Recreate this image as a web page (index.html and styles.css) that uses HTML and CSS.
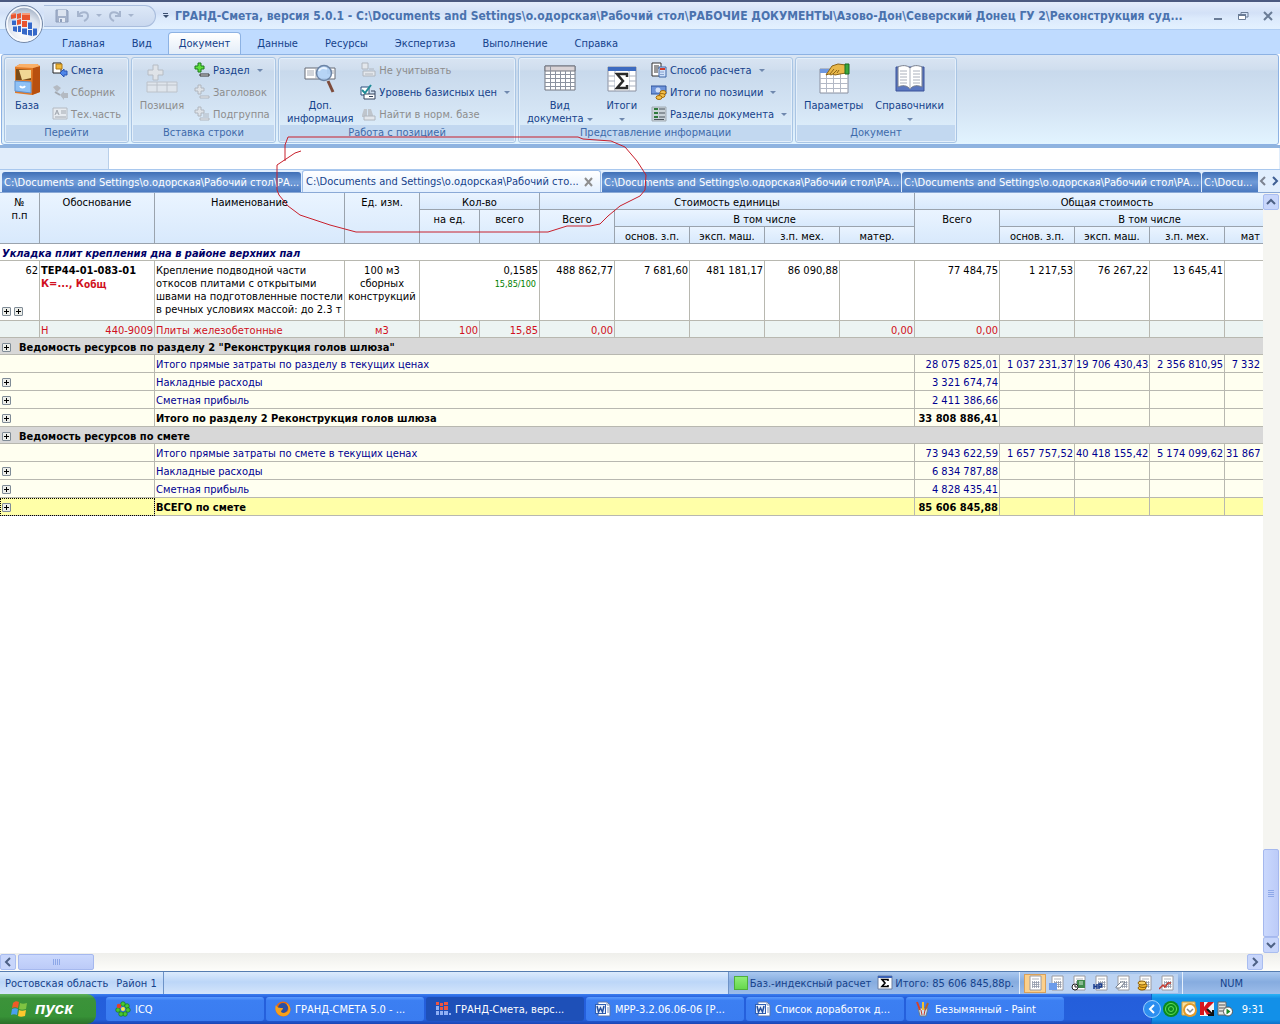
FILE: index.html
```html
<!DOCTYPE html>
<html lang="ru">
<head>
  <meta charset="UTF-8" />
  <meta name="viewport" content="width=device-width, initial-scale=1.0" />
  <title>ГРАНД-Смета, версия 5.0.1</title>
  <link rel="stylesheet" href="styles.css">
</head>
<body>

  <!-- Shared icons -->
  <svg class="sprite" aria-hidden="true">
    <symbol id="i-word" viewBox="0 0 16 16">
      <path d="M3 1h9l3 3v11H3z" fill="#fff" stroke="#5a77ad"/>
      <path d="M12 1v3h3M12 7h2M12 9h2M12 11h2" fill="none" stroke="#7b93c0"/>
      <path d="M0 3h11v10H0z" fill="#2f5fb3"/>
      <path d="M1 4h9v8H1z" fill="#e8effb"/>
      <path d="M2 5l1.500 6L5.500 7l2 4L9 5" fill="none" stroke="#2350a0" stroke-width="1.500"/>
    </symbol>
    <symbol id="i-sheet" viewBox="0 0 16 16">
      <path d="M3 1h11v14H3z" fill="#fff" stroke="#9a9aa0"/>
      <path d="M5 3h7v2H5z" fill="#d8dade"/>
      <path d="M5.500 7.500h7M5.500 9.500h7M5.500 11.500h7M5.500 6v7M7.500 6v7M9.500 6v7M11.500 6v7" stroke="#9098a8" stroke-width=".8"/>
    </symbol>
    <symbol id="i-plusdoc" viewBox="0 0 16 16">
      <path d="M6 12h9v2H6z" fill="#e9edf2" stroke="var(--base)"/>
      <path d="M4 1h3v3h3v3H7v3H4V7H1V4h3z" fill="var(--plus)" stroke="currentColor"/>
    </symbol>
    <symbol id="i-sigma" viewBox="0 0 16 16">
      <path d="M1 1h14v13H1z" fill="#fff" stroke="#6d7f9f"/>
      <path d="M1 1h14v2H1z" fill="#3a62b5"/>
      <path d="M11 6V4.500H5L8 8l-3 3.500h6V10" fill="none" stroke="#000" stroke-width="1.600"/>
    </symbol>
  </svg>

  <!-- Title bar -->
  <header class="titlebar">
    <button class="orb" aria-label="Меню приложения">
      <svg viewBox="0 0 40 40" width="40" height="40">
        <defs>
          <radialGradient id="orb" cx="50%" cy="75%" r="75%">
            <stop offset="0" stop-color="#fff"/><stop offset=".6" stop-color="#dbe2ec"/><stop offset="1" stop-color="#98a7be"/>
          </radialGradient>
        </defs>
        <circle cx="20" cy="20" r="18.500" fill="url(#orb)" stroke="#7388a8"/>
        <circle cx="20" cy="20" r="17" fill="none" stroke="#f8fbff" stroke-width="1.500"/>
        <path d="M7 10l5-1v5l-5 1zM13 10l4-1v5l-4 1zM18 9l8 0v7h-8zM13 16l4-1v5l-4 1zM18 17h5v6h-5z" fill="#e8552f"/>
        <path d="M18 9h8v2h-8zM7 10l5-1v1l-5 1z" fill="#f79a78"/>
        <path d="M8 16l4 0v5l-4 0zM9 22l4 0v6l-4-1zM14 22l3 0v6l-3 0zM18 24h5v7l-5-1zM24 18l4 0v7h-4zM24 26h4v6l-4-1zM29 24l4 0v7l-4 1z" fill="#3568c8"/>
        <path d="M8 16h4v1H8zM9 22h4v1H9zM18 24h5v1h-5zM24 18h4v1h-4zM29 24h4v1h-4z" fill="#86aef0"/>
      </svg>
    </button>
    <div class="quick">
      <button aria-label="Сохранить">
        <svg viewBox="0 0 16 16" width="16" height="16"><path d="M2 2h11l1 1v11H2z" fill="#a3b1ca" stroke="#8f9fbb"/><path d="M4 2h8v6H4z" fill="#dce4f0"/><path d="M5 10h6v4H5z" fill="#e4eaf4"/><path d="M6 11h2v3H6z" fill="#8f9fbb"/></svg>
      </button>
      <button aria-label="Отменить">
        <svg viewBox="0 0 16 16" width="16" height="16"><path d="M3 3v5h5M3 8c3-5 10-5 10 0 0 3-2 4-4 5" fill="none" stroke="#a6b5ce" stroke-width="2"/></svg>
      </button>
      <i class="caret pale"></i>
      <button aria-label="Вернуть">
        <svg viewBox="0 0 16 16" width="16" height="16"><path d="M13 3v5H8M13 8C10 3 3 3 3 8c0 3 2 4 4 5" fill="none" stroke="#a6b5ce" stroke-width="2"/></svg>
      </button>
      <i class="caret pale"></i>
    </div>
    <button class="custom" aria-label="Настройка панели"><i class="caret dark"></i></button>
    <h1>ГРАНД-Смета, версия 5.0.1 - C:\Documents and Settings\о.одорская\Рабочий стол\РАБОЧИЕ ДОКУМЕНТЫ\Азово-Дон\Северский Донец ГУ 2\Реконструкция суд...</h1>
    <div class="winbtns">
      <button aria-label="Свернуть"><svg viewBox="0 0 12 12" width="12" height="12"><path d="M2 9h8" stroke="#6a7c96" stroke-width="2"/></svg></button>
      <button aria-label="Восстановить"><svg viewBox="0 0 12 12" width="12" height="12"><path d="M4 4V2.500h7V7H9" fill="none" stroke="#6a7c96"/><path d="M1.500 4.500h7v5h-7z" fill="#fff" stroke="#6a7c96"/><path d="M1 5h8" stroke="#6a7c96" stroke-width="2"/></svg></button>
      <button aria-label="Закрыть"><svg viewBox="0 0 12 12" width="12" height="12"><path d="M2 2l8 8M10 2l-8 8" stroke="#6a7c96" stroke-width="2"/></svg></button>
    </div>
  </header>

  <!-- Ribbon tabs -->
  <nav class="tabs">
    <a href="#">Главная</a>
    <a href="#">Вид</a>
    <a href="#" class="active">Документ</a>
    <a href="#">Данные</a>
    <a href="#">Ресурсы</a>
    <a href="#">Экспертиза</a>
    <a href="#">Выполнение</a>
    <a href="#">Справка</a>
  </nav>

  <!-- Ribbon -->
  <div class="ribbon">
    <section class="group go">
      <div class="tools">
        <button class="big">
          <svg viewBox="0 0 32 32" width="32" height="32">
            <path d="M4 4l5-3h17l3 2v26l-8 3-17-2z" fill="#e27a26"/>
            <path d="M22 5l7-2v26l-8 3z" fill="#b8500f"/>
            <path d="M4 4l5-3h17l3 2-7 2z" fill="#f9b069"/>
            <path d="M5 6l15 1v10H5z" fill="#7a4b18"/>
            <path d="M8 7l12 0v8l-9 2z" fill="#f0d795"/>
            <path d="M4 18l16 1v11L4 28z" fill="#8fc1f5" stroke="#5e93d3"/>
            <path d="M9 23c1 2 4 2 5 0" fill="none" stroke="#fff" stroke-width="2"/>
          </svg>
          <span>База</span>
        </button>
        <div class="list">
          <button>
            <svg viewBox="0 0 16 16"><path d="M1 1h8v10H1z" fill="#fff" stroke="#222"/><path d="M4 2h6v5H4z" fill="#f0b93a" stroke="#b37a12"/><path d="M8 11l4-4v2h3v4h-3v2z" fill="#4f86e8" stroke="#2b57b5"/></svg>
            Смета
          </button>
          <button disabled>
            <svg viewBox="0 0 16 16"><path d="M1 3l4-2 4 3-4 4z" fill="#b4bac2"/><path d="M8 11l4-4v2h4v5h-4v2z" fill="#b4bac2"/><path d="M3 8l5 3" stroke="#a2a8b0" stroke-width="2"/></svg>
            Сборник
          </button>
          <button disabled>
            <svg viewBox="0 0 16 16"><path d="M1 2h14v11H1z" fill="#e6ebf0" stroke="#b4bac2"/><path d="M3 9l2-5 2 5M4 7h2M9 5h5M9 7h5M3 11h11" fill="none" stroke="#a2a8b0"/></svg>
            Тех.часть
          </button>
        </div>
      </div>
      <h2>Перейти</h2>
    </section>

    <section class="group insert">
      <div class="tools">
        <button class="big" disabled>
          <svg viewBox="0 0 32 32" width="32" height="32">
            <path d="M7 2h5v5h5v5h-5v5H7v-5H2V7h5z" fill="#dfe3e8" stroke="#b6bcc4"/>
            <path d="M1 19h30v10H1zM11 19v10M21 19v10M1 22h30" fill="#dfe5ec" stroke="#bcc2ca"/>
          </svg>
          <span>Позиция</span>
        </button>
        <div class="list">
          <button><svg class="green" viewBox="0 0 16 16"><use href="#i-plusdoc"/></svg>Раздел<i class="caret"></i></button>
          <button disabled><svg class="grey" viewBox="0 0 16 16"><use href="#i-plusdoc"/></svg>Заголовок</button>
          <button disabled><svg class="grey" viewBox="0 0 16 16"><use href="#i-plusdoc"/><path d="M9 8h6M9 10h6" stroke="#b0b6be"/></svg>Подгруппа</button>
        </div>
      </div>
      <h2>Вставка строки</h2>
    </section>

    <section class="group position">
      <div class="tools">
        <button class="big">
          <svg viewBox="0 0 32 32" width="32" height="32">
            <path d="M1 5h30v11H1z" fill="#fff" stroke="#666b75"/>
            <path d="M3 8h7M3 10h7M3 12h7M12 5v11M23 8h7M23 10h7" stroke="#a5abb5"/>
            <path d="M24 18l5 11" stroke="#7d4b3b" stroke-width="3"/>
            <circle cx="20" cy="10" r="7.500" fill="#a9cdf5" fill-opacity=".85" stroke="#6c84a5" stroke-width="1.500"/>
            <path d="M15 8c1-3 5-4 8-2" fill="none" stroke="#e8f3ff" stroke-width="2"/>
          </svg>
          <span>Доп.<br>информация</span>
        </button>
        <div class="list">
          <button disabled>
            <svg viewBox="0 0 16 16"><path d="M2 1h6v6H2z" fill="#e3e7ec" stroke="#b0b6be"/><path d="M3 9h12v5H3z" fill="#e3e7ec" stroke="#b0b6be"/><path d="M9 7h5M5 12h8" stroke="#b0b6be"/></svg>
            Не учитывать
          </button>
          <button>
            <svg viewBox="0 0 16 16"><path d="M1 3h8v8H1z" fill="#fff" stroke="#2b4f7c"/><path d="M4 10h11v5H4z" fill="#fff" stroke="#33435c"/><path d="M9 12.500h4M11 7h4v3" fill="none" stroke="#33435c"/><path d="M2 6l3 3 6-8" fill="none" stroke="#1e8b96" stroke-width="2"/></svg>
            Уровень базисных цен<i class="caret"></i>
          </button>
          <button disabled>
            <svg viewBox="0 0 16 16"><path d="M2 9l2-6h3v8H2zM8 3h3l2 6v2H8z" fill="#bfc5cc"/><path d="M4 10h11v4H4z" fill="#e3e7ec" stroke="#b0b6be"/></svg>
            Найти в норм. базе
          </button>
        </div>
      </div>
      <h2>Работа с позицией</h2>
    </section>

    <section class="group view">
      <div class="tools">
        <button class="big">
          <svg viewBox="0 0 32 32" width="32" height="32">
            <path d="M1 3h30v24H1z" fill="#fff" stroke="#70757f"/>
            <path d="M1 3h30v5H1z" fill="#d9d3d6" stroke="#70757f"/>
            <path d="M1 11.500h30M1 15.500h30M1 19.500h30M1 23.500h30M6.500 3v24M11.500 8v19M16.500 8v19M21.500 8v19M26.500 8v19" stroke="#8c93a0"/>
          </svg>
          <span>Вид<br>документа <i class="caret"></i></span>
        </button>
        <button class="big">
          <svg viewBox="0 0 32 32" width="32" height="32">
            <path d="M2 4h28v24H2z" fill="#fff" stroke="#8a90a0"/>
            <path d="M2 4h28v4H2z" fill="#3d6bc0"/>
            <path d="M2 13h28M2 18h28M2 23h28M9 8v20M23 8v20" stroke="#a9b1c0"/>
            <path d="M9 9h14v18H9z" fill="#fff"/>
            <path d="M21 14v-3H11l6 7-6 7h10v-3" fill="none" stroke="#2a2a2a" stroke-width="2.500"/>
          </svg>
          <span>Итоги<br><i class="caret"></i></span>
        </button>
        <div class="list">
          <button>
            <svg viewBox="0 0 16 16"><path d="M1 1h9v13H1z" fill="#fff" stroke="#333"/><path d="M3 4h5M3 6h5M3 8h4M3 10h4" stroke="#333"/><path d="M8 5h7v10H8z" fill="#cfe0f8" stroke="#3c66a8"/><path d="M9 7h5" stroke="#d03c2c" stroke-width="2"/><path d="M9.500 10h4M9.500 12.500h4" stroke="#3c66a8" stroke-dasharray="1 1"/></svg>
            Способ расчета<i class="caret"></i>
          </button>
          <button>
            <svg viewBox="0 0 16 16"><path d="M0 2h15v8H0z" fill="#6d93da" stroke="#31549c"/><circle cx="7" cy="6" r="2.500" fill="#cfdef8"/><ellipse cx="12" cy="8.500" rx="3" ry="2" fill="#f4c24e" stroke="#a56b0c"/><ellipse cx="11" cy="11.500" rx="3" ry="2" fill="#f4c24e" stroke="#a56b0c"/><ellipse cx="8" cy="13.500" rx="3" ry="2" fill="#f4c24e" stroke="#a56b0c"/></svg>
            Итоги по позиции<i class="caret"></i>
          </button>
          <button>
            <svg viewBox="0 0 16 16"><path d="M1 1h14v14H1z" fill="#c9d2d8" stroke="#a2acb4"/><path d="M3 3h4M3 7h4M3 11h4" stroke="#2f7a3c" stroke-width="2"/><path d="M8 3h6M8 7h6M8 11h6M3 13.500h10" stroke="#4a545c"/></svg>
            Разделы документа<i class="caret"></i>
          </button>
        </div>
      </div>
      <h2>Представление информации</h2>
    </section>

    <section class="group doc">
      <div class="tools">
        <button class="big">
          <svg viewBox="0 0 32 32" width="32" height="32">
            <path d="M2 6h28v24H2z" fill="#fff" stroke="#8a90a0"/>
            <path d="M2 6h28v4H2z" fill="#6f98e0"/>
            <path d="M2 15.500h28M2 20.500h28M2 25.500h28M8.500 10v20M15.500 10v20M22.500 10v20" stroke="#b3b9c6"/>
            <path d="M8 12l6-9 6-2 8 1v8l-6 1-5 1-2-1-2 1-2-1z" fill="#e9b84a" stroke="#8c6417"/>
            <path d="M12 11l4-5M15 11l4-4M19 10l2-3" stroke="#8c6417"/>
            <path d="M27 1h4v10h-4z" fill="#39a83c" stroke="#1c6a22"/>
          </svg>
          <span>Параметры</span>
        </button>
        <button class="big">
          <svg viewBox="0 0 32 32" width="32" height="32">
            <path d="M2 4h28v24H2z" fill="#5a77c0" stroke="#3b539a"/>
            <path d="M4 4c4-2 9-2 12 1 3-3 8-3 12-1v20c-4-2-9-2-12 2-3-4-8-4-12-2z" fill="#fff" stroke="#777e8c"/>
            <path d="M16 5v21M6 8h7M6 11h7M6 14h7M6 17h7M6 20h7M19 8h7M19 11h7M19 14h7M19 17h7M19 20h7" stroke="#aab0bc"/>
          </svg>
          <span>Справочники<br><i class="caret"></i></span>
        </button>
      </div>
      <h2>Документ</h2>
    </section>
  </div>

  <!-- Formula line -->
  <div class="formula">
    <input type="text" aria-label="Строка ввода">
  </div>

  <!-- Open documents -->
  <div class="doctabs">
    <div class="strip">
      <button>C:\Documents and Settings\о.одорская\Рабочий стол\РА...</button>
      <button class="active"><span>C:\Documents and Settings\о.одорская\Рабочий сто...</span>
        <svg viewBox="0 0 10 10" width="10" height="10"><path d="M1 1l7 8M8 1L1 9" stroke="#8f8f8f" stroke-width="2"/></svg></button>
      <button>C:\Documents and Settings\о.одорская\Рабочий стол\РА...</button>
      <button>C:\Documents and Settings\о.одорская\Рабочий стол\РА...</button>
      <button class="last">C:\Docu...</button>
    </div>
    <div class="arrows">
      <button aria-label="Назад"><svg viewBox="0 0 8 10" width="8" height="10"><path d="M6 1L2 5l4 4" fill="none" stroke="#7c8290" stroke-width="2"/></svg></button>
      <button aria-label="Вперед"><svg viewBox="0 0 8 10" width="8" height="10"><path d="M2 1l4 4-4 4" fill="none" stroke="#3f5f94" stroke-width="2"/></svg></button>
    </div>
  </div>

  <!-- Estimate grid -->
  <main class="work">
    <div class="sheet">
      <table>
        <colgroup>
          <col class="w40"><col class="w115"><col class="w190"><col class="w75"><col class="w60"><col class="w60">
          <col class="w75"><col class="w75"><col class="w75"><col class="w75"><col class="w75">
          <col class="w85"><col class="w75"><col class="w75"><col class="w75"><col class="w75">
        </colgroup>
        <thead>
          <tr>
            <th rowspan="3">№<br>п.п</th>
            <th rowspan="3">Обоснование</th>
            <th rowspan="3">Наименование</th>
            <th rowspan="3">Ед. изм.</th>
            <th colspan="2">Кол-во</th>
            <th colspan="5">Стоимость единицы</th>
            <th colspan="5">Общая стоимость</th>
          </tr>
          <tr>
            <th rowspan="2">на ед.</th>
            <th rowspan="2">всего</th>
            <th rowspan="2">Всего</th>
            <th colspan="4">В том числе</th>
            <th rowspan="2">Всего</th>
            <th colspan="4">В том числе</th>
          </tr>
          <tr>
            <th>основ. з.п.</th><th>эксп. маш.</th><th>з.п. мех.</th><th>матер.</th>
            <th>основ. з.п.</th><th>эксп. маш.</th><th>з.п. мех.</th><th class="cut">мат</th>
          </tr>
        </thead>
        <tbody>
          <tr class="section"><td colspan="16">Укладка плит крепления дна в районе верхних пал</td></tr>
          <tr class="item">
            <td class="num"><div class="stack">62<span><button class="plus" aria-label="Развернуть"></button><button class="plus" aria-label="Развернуть"></button></span></div></td>
            <td><b>ТЕР44-01-083-01</b><br><b class="coef">К=..., К<small>общ</small></b></td>
            <td>Крепление подводной части откосов плитами с открытыми швами на подготовленные постели в речных условиях массой: до 2.3 т</td>
            <td class="mid">100 м3<br>сборных<br>конструкций</td>
            <td colspan="2" class="num">0,1585<br><small class="calc">15,85/100</small></td>
            <td class="num">488 862,77</td>
            <td class="num">7 681,60</td>
            <td class="num">481 181,17</td>
            <td class="num">86 090,88</td>
            <td></td>
            <td class="num">77 484,75</td>
            <td class="num">1 217,53</td>
            <td class="num">76 267,22</td>
            <td class="num">13 645,41</td>
            <td></td>
          </tr>
          <tr class="res">
            <td></td>
            <td><div class="pair"><span>Н</span><span>440-9009</span></div></td>
            <td>Плиты железобетонные</td>
            <td class="mid">м3</td>
            <td class="num">100</td>
            <td class="num">15,85</td>
            <td class="num">0,00</td>
            <td></td><td></td><td></td>
            <td class="num">0,00</td>
            <td class="num">0,00</td>
            <td></td><td></td><td></td><td></td>
          </tr>
          <tr class="sum"><td colspan="16"><button class="plus" aria-label="Развернуть"></button>Ведомость ресурсов по разделу 2 "Реконструкция голов шлюза"</td></tr>
          <tr class="total">
            <td colspan="2"></td><td colspan="9">Итого прямые затраты по разделу в текущих ценах</td>
            <td class="num">28 075 825,01</td><td class="num">1 037 231,37</td><td class="num">19 706 430,43</td><td class="num">2 356 810,95</td><td class="num cut">7 332</td>
          </tr>
          <tr class="total">
            <td colspan="2"><button class="plus" aria-label="Развернуть"></button></td><td colspan="9">Накладные расходы</td>
            <td class="num">3 321 674,74</td><td></td><td></td><td></td><td></td>
          </tr>
          <tr class="total">
            <td colspan="2"><button class="plus" aria-label="Развернуть"></button></td><td colspan="9">Сметная прибыль</td>
            <td class="num">2 411 386,66</td><td></td><td></td><td></td><td></td>
          </tr>
          <tr class="total strong">
            <td colspan="2"><button class="plus" aria-label="Развернуть"></button></td><td colspan="9">Итого по разделу 2 Реконструкция голов шлюза</td>
            <td class="num">33 808 886,41</td><td></td><td></td><td></td><td></td>
          </tr>
          <tr class="sum"><td colspan="16"><button class="plus" aria-label="Развернуть"></button>Ведомость ресурсов по смете</td></tr>
          <tr class="total">
            <td colspan="2"></td><td colspan="9">Итого прямые затраты по смете в текущих ценах</td>
            <td class="num">73 943 622,59</td><td class="num">1 657 757,52</td><td class="num">40 418 155,42</td><td class="num">5 174 099,62</td><td class="num cut">31 867</td>
          </tr>
          <tr class="total">
            <td colspan="2"><button class="plus" aria-label="Развернуть"></button></td><td colspan="9">Накладные расходы</td>
            <td class="num">6 834 787,88</td><td></td><td></td><td></td><td></td>
          </tr>
          <tr class="total">
            <td colspan="2"><button class="plus" aria-label="Развернуть"></button></td><td colspan="9">Сметная прибыль</td>
            <td class="num">4 828 435,41</td><td></td><td></td><td></td><td></td>
          </tr>
          <tr class="total strong current">
            <td colspan="2" class="focus"><button class="plus" aria-label="Развернуть"></button></td><td colspan="9">ВСЕГО по смете</td>
            <td class="num">85 606 845,88</td><td></td><td></td><td></td><td></td>
          </tr>
        </tbody>
      </table>
    </div>
    <div class="vscroll">
      <button aria-label="Вверх"><svg viewBox="0 0 10 10" width="10" height="10"><path d="M1 7l4-4 4 4" fill="none" stroke="#4d6185" stroke-width="2"/></svg></button>
      <div class="thumb"></div>
      <button aria-label="Вниз"><svg viewBox="0 0 10 10" width="10" height="10"><path d="M1 3l4 4 4-4" fill="none" stroke="#4d6185" stroke-width="2"/></svg></button>
    </div>
  </main>
  <div class="hscroll">
    <button aria-label="Влево"><svg viewBox="0 0 10 10" width="10" height="10"><path d="M7 1L3 5l4 4" fill="none" stroke="#4d6185" stroke-width="2"/></svg></button>
    <div class="thumb"></div>
    <button class="end" aria-label="Вправо"><svg viewBox="0 0 10 10" width="10" height="10"><path d="M3 1l4 4-4 4" fill="none" stroke="#4d6185" stroke-width="2"/></svg></button>
  </div>

  <!-- Status bar -->
  <div class="status">
    <div class="place"><span>Ростовская область</span><span>Район 1</span></div>
    <div class="calcmode">
      <i class="lamp"></i><span class="mode">Баз.-индексный расчет</span>
      <svg viewBox="0 0 16 16" width="16" height="16"><use href="#i-sigma"/></svg><span>Итого: 85 606 845,88р.</span>
    </div>
    <div class="modes">
      <button class="on" aria-label="Смета"><svg viewBox="0 0 16 16"><use href="#i-sheet"/></svg></button>
      <button aria-label="Ресурсы"><svg viewBox="0 0 16 16"><use href="#i-sheet"/><path d="M0 8h8v7H0z" fill="#6b9bea"/></svg></button>
      <button aria-label="График"><svg viewBox="0 0 16 16"><use href="#i-sheet"/><path d="M6 5h8v8H6z" fill="#3f8a4a"/><path d="M8 7h4M8 9h4" stroke="#d5ecd7"/><circle cx="4" cy="12" r="3" fill="#fff" stroke="#222"/><path d="M4 10v2h2" fill="none" stroke="#222"/></svg></button>
      <button aria-label="Накладные расходы"><svg viewBox="0 0 16 16"><use href="#i-sheet"/><path d="M1 9v5M4 9v5M1 11.500h3M6 14V9h2.500v3H6" fill="none" stroke="#173a8c" stroke-width="1.500"/></svg></button>
      <button aria-label="Правка"><svg viewBox="0 0 16 16"><use href="#i-sheet"/><path d="M1 12l5-5h4l-5 6H1z" fill="#fff" stroke="#7a828f"/></svg></button>
      <button aria-label="Цены"><svg viewBox="0 0 16 16"><use href="#i-sheet"/><ellipse cx="5" cy="13" rx="4" ry="2" fill="#f3b62c" stroke="#8c5d05"/><ellipse cx="6" cy="10.500" rx="4" ry="2" fill="#f3b62c" stroke="#8c5d05"/><ellipse cx="5" cy="8" rx="4" ry="2" fill="#f8cf62" stroke="#8c5d05"/></svg></button>
      <button aria-label="Индексы"><svg viewBox="0 0 16 16"><use href="#i-sheet"/><path d="M0 14l4-4 2 2 3-4 3 0" fill="none" stroke="#c43a2e" stroke-width="1.500"/></svg></button>
    </div>
    <div class="keys">NUM</div>
  </div>

  <!-- Taskbar -->
  <footer class="taskbar">
    <button class="start">
      <svg viewBox="0 0 18 18" width="18" height="18">
        <path d="M2 3c2-2 4-2 6-1L7 8C5 7 3 7 1 8z" fill="#ef5a28"/>
        <path d="M9 3c2 1 4 1 7 0l-1 6c-3 1-5 1-7 0z" fill="#7fc342"/>
        <path d="M1 9c2-1 4-1 6 0l-1 6c-2-1-4-1-6 0z" fill="#4aa0ee"/>
        <path d="M8 10c2 1 4 1 7 0l-1 6c-3 1-5 1-7 0z" fill="#fcc82d"/>
      </svg>
      пуск
    </button>
    <div class="tasks">
      <button>
        <svg viewBox="0 0 16 16"><g fill="#46c832" stroke="#126b12" stroke-width=".6"><circle cx="8" cy="3" r="2.300"/><circle cx="12" cy="5" r="2.300"/><circle cx="13" cy="9" r="2.300"/><circle cx="10" cy="13" r="2.300"/><circle cx="6" cy="13" r="2.300"/><circle cx="3" cy="9" r="2.300"/></g><circle cx="4" cy="5" r="2.300" fill="#e4402a"/><circle cx="8" cy="8" r="2" fill="#ffe94a"/></svg>
        ICQ
      </button>
      <button>
        <svg viewBox="0 0 16 16"><circle cx="8" cy="8" r="7.500" fill="#e66a12"/><circle cx="8" cy="7" r="5" fill="#2a4fa5"/><path d="M1 4c1 3 4 3 7 3 0 2-2 2-2 4 2 2 5 1 7-1 1-3 0-5-2-8 4 2 5 6 4 9-2 5-9 6-13 1C0 9 0 6 1 4z" fill="#f7a11b"/></svg>
        ГРАНД-СМЕТА 5.0 - ...
      </button>
      <button class="active">
        <svg viewBox="0 0 16 16"><path d="M1 1h3v3H1zM5 2h3v3H5zM9 1h4v3H9zM5 6h3v3H5zM9 5h4v4H9z" fill="#ef5540"/><path d="M1 5h3v4H1zM1 10h3v4H1zM5 10h3v4H5zM9 10h4v4H9zM14 12h2v2h-2z" fill="#8fb0f5"/></svg>
        ГРАНД-Смета, верс...
      </button>
      <button><svg viewBox="0 0 16 16"><use href="#i-word"/></svg>МРР-3.2.06.06-06 [Р...</button>
      <button><svg viewBox="0 0 16 16"><use href="#i-word"/></svg>Список доработок д...</button>
      <button>
        <svg viewBox="0 0 16 16"><path d="M3 7h10l-2 8H5z" fill="#cfe3ee" stroke="#6a7b88"/><path d="M5 9L2 1" stroke="#d8402a" stroke-width="2"/><path d="M8 9V1" stroke="#f2c230" stroke-width="2"/><path d="M10 9l3-7" stroke="#b0642c" stroke-width="2"/><path d="M6 9l1 5M10 9l-1 5" stroke="#c83a2a"/></svg>
        Безымянный - Paint
      </button>
    </div>
    <div class="tray">
      <button class="expand" aria-label="Показать значки"><svg viewBox="0 0 18 18" width="18" height="18"><circle cx="9" cy="9" r="8.500" fill="#2c8ef0" stroke="#9fd0ff"/><path d="M11 5L7 9l4 4" fill="none" stroke="#fff" stroke-width="2"/></svg></button>
      <svg viewBox="0 0 16 16" width="16" height="16"><circle cx="8" cy="8" r="8" fill="#0b8a1c"/><circle cx="8" cy="8" r="5.500" fill="none" stroke="#5fe05a"/><circle cx="8" cy="8" r="2.500" fill="none" stroke="#5fe05a"/></svg>
      <svg viewBox="0 0 16 16" width="16" height="16"><path d="M1 1h13v13H1z" fill="#f7dfa0" stroke="#e2a22c"/><circle cx="9" cy="9" r="6" fill="#fff" stroke="#e09a2a" stroke-width="2"/><path d="M6 8l3 3 3-3" fill="none" stroke="#8a8a8a" stroke-width="1.500"/></svg>
      <svg viewBox="0 0 16 16" width="16" height="16"><path d="M1 1h14v14H1z" fill="#f3f3f3"/><path d="M1 1h4v5l4-5h6L8 8l4 6H8L5 9v5H1z" fill="#d8141c"/><path d="M8 8l6 6M14 9v5H9" fill="none" stroke="#111" stroke-width="2"/></svg>
      <svg viewBox="0 0 16 16" width="16" height="16"><path d="M1 1h8v13H1z" fill="#e4e4e0" stroke="#666"/><path d="M2 4h6M2 7h6M2 10h4" stroke="#555"/><circle cx="11" cy="10.500" r="4.500" fill="#fff" stroke="#555"/><path d="M9.500 7.500v6l4-3z" fill="#1c8a26"/></svg>
      <time>9:31</time>
    </div>
  </footer>

  <!-- Pen mark round the active document tab -->
  <svg class="mark" width="372" height="100" viewBox="276 135 372 100" aria-hidden="true">
    <path d="M285 161v-16l3-8h290l5 2 28 2 14 6 12 14 9 14-1 15-5 6-20 10-12 10-8 8-10 2h-23l-19 6H356l-26-7-30-10-12-9-9-11-2-5v-25l6-4 12-8 6-2" fill="none" stroke="#c8202c"/>
  </svg>

</body>
</html>
```

FILE: styles.css
```css
* {
  box-sizing: border-box;
}
body {
  margin: 0;
  height: 100vh;
  display: flex;
  flex-direction: column;
  position: relative;
  overflow: hidden;
  background: #fff;
  font-family: "DejaVu Sans Condensed", "DejaVu Sans", sans-serif;
  font-size: 11px;
  line-height: 13px;
  color: #000;
}
button {
  margin: 0;
  padding: 0;
  border: none;
  background: none;
  font: inherit;
  color: inherit;
  cursor: pointer;
}
h1, h2 {
  margin: 0;
}
svg {
  display: block;
  flex: none;
}
.sprite {
  position: absolute;
  width: 0;
  height: 0;
}
.caret {
  display: inline-block;
  flex: none;
  border: 3px solid transparent;
  border-top-color: #6f88ae;
  border-bottom: none;
}
.caret.pale {
  border-top-color: #a6b5ce;
}
.caret.dark {
  border-top-color: #3b4f70;
}

/* Title bar */
.titlebar {
  flex: none;
  display: flex;
  align-items: center;
  height: 30px;
  padding: 0 6px 0 4px;
  border-top: 2px solid #4c5a80;
  border-bottom: 1px solid #b0cdf2;
  background: linear-gradient(#e4edfb, #d3e1f7 40%, #dceafc 60%, #e3f1ff);
}
.orb {
  align-self: flex-start;
  width: 40px;
  height: 40px;
  margin-top: 2px;
  position: relative;
  z-index: 2;
}
.quick {
  display: flex;
  align-items: center;
  gap: 5px;
  height: 22px;
  width: 112px;
  padding-left: 10px;
  border: 1px solid #a9bddd;
  border-left: none;
  border-radius: 0 12px 12px 0;
  background: linear-gradient(#dde8f7, #c9d8ef);
}
.custom {
  width: 19px;
  display: flex;
  flex-direction: column;
  align-items: center;
  gap: 1px;
}
.custom::before {
  content: "";
  width: 5px;
  height: 1px;
  background: #3b4f70;
}
.titlebar h1 {
  flex: 1;
  overflow: hidden;
  white-space: nowrap;
  font-size: 12px;
  line-height: 16px;
  color: #4a72ae;
}
.winbtns {
  display: flex;
  gap: 13px;
  padding-left: 12px;
}

/* Ribbon tabs */
.tabs {
  flex: none;
  display: flex;
  align-items: flex-end;
  gap: 5px;
  height: 24px;
  padding-left: 51px;
  background: #bfdbff;
}
.tabs a {
  height: 22px;
  padding: 2px 11px 0;
  line-height: 20px;
  color: #15428b;
  text-decoration: none;
}
.tabs .active {
  padding: 1px 10px 0;
  border: 1px solid #8db2e3;
  border-bottom: none;
  border-radius: 4px 4px 0 0;
  background: linear-gradient(#fff, #e3edf8);
}

/* Ribbon */
.ribbon {
  flex: none;
  display: flex;
  gap: 2px;
  height: 91px;
  margin: 0 1px;
  padding: 2px 2px 1px;
  border: 1px solid #8db2e3;
  border-radius: 3px;
  background: linear-gradient(#dbe6f4, #d0deee 16%, #c8d9ec 18%, #d4e4f4 60%, #e2f4ff);
}
.group {
  display: flex;
  flex-direction: column;
  border: 1px solid #a9c5e4;
  border-radius: 3px;
  box-shadow: inset 0 0 0 1px #e4effa;
}
.go { width: 125px; }
.insert { width: 145px; }
.position { width: 238px; }
.view { width: 275px; }
.doc { width: 162px; }
.tools {
  flex: 1;
  display: flex;
  padding: 1px 5px 0;
  color: #15428b;
}
.go .tools { gap: 8px; }
.insert .tools { gap: 4px; padding-left: 2px; }
.position .tools { gap: 7px; padding-left: 8px; }
.view .tools { justify-content: space-between; padding-left: 8px; }
.doc .tools { justify-content: space-between; padding: 1px 12px 0 8px; }
.group h2 {
  height: 16px;
  margin: 0 1px 1px;
  background: #c2d8f0;
  font-size: 11px;
  line-height: 15px;
  font-weight: normal;
  text-align: center;
  color: #3e6aaa;
}
.big {
  display: flex;
  flex-direction: column;
  align-items: center;
  padding-top: 4px;
  min-width: 34px;
}
.big span {
  margin-top: 4px;
}
.insert .big,
.doc .big {
  min-width: 56px;
}
.big .caret {
  vertical-align: middle;
}
.list {
  display: flex;
  flex-direction: column;
}
.list button {
  display: flex;
  align-items: center;
  gap: 3px;
  height: 22px;
  white-space: nowrap;
}
.list svg {
  width: 16px;
  height: 16px;
}
.list .caret {
  margin-left: 4px;
}
button:disabled {
  color: #8d8d8d;
}
.green {
  color: #1c7a1c;
  --plus: #5fe03c;
  --base: #333;
}
.grey {
  color: #b0b6be;
  --plus: #dfe3e8;
  --base: #b0b6be;
}

/* Formula line */
.formula {
  flex: none;
  display: flex;
  height: 24px;
  padding: 0 1px 0 108px;
  border-top: 3px solid #8fb3df;
  background: #e1edfb;
}
.formula input {
  flex: 1;
  border: none;
  border-left: 1px solid #b9cfe9;
  background: #fff;
  font: inherit;
}

/* Document tabs */
.doctabs {
  flex: none;
  display: flex;
  height: 24px;
  border-top: 1px solid #a9c8ee;
  border-bottom: 1px solid #8aa9d6;
  background: #e1eefd;
}
.strip {
  flex: 1;
  display: flex;
  align-items: flex-end;
  gap: 1px;
  padding-left: 2px;
  overflow: hidden;
}
.strip button {
  flex: none;
  width: 299px;
  height: 20px;
  padding: 1px 2px 0;
  border-radius: 3px 3px 0 0;
  background: linear-gradient(#3f6fb6, #6f9bd8 50%, #4a79c0);
  color: #fff;
  text-align: left;
  white-space: nowrap;
  overflow: hidden;
}
.strip .active {
  display: flex;
  align-items: center;
  justify-content: space-between;
  height: 22px;
  padding: 0 6px 0 3px;
  border: 1px solid #9dbde8;
  border-bottom: none;
  background: linear-gradient(#fff, #e3f0ff);
  color: #15428b;
}
.strip .last {
  flex: 1;
  width: auto;
  border-top-right-radius: 0;
}
.arrows {
  display: flex;
  gap: 4px;
  padding: 0 1px;
}

/* Grid */
.work {
  flex: 1;
  min-height: 0;
  display: flex;
}
.sheet {
  flex: 1;
  min-width: 0;
  overflow: hidden;
}
table {
  table-layout: fixed;
  width: 1300px;
  border-collapse: separate;
  border-spacing: 0;
}
.w40 { width: 40px; }
.w60 { width: 60px; }
.w75 { width: 75px; }
.w85 { width: 85px; }
.w115 { width: 115px; }
.w190 { width: 190px; }
th, td {
  height: 17px;
  padding: 1px;
  border-right: 1px solid #b8b8b0;
  border-bottom: 1px solid #b8b8b0;
  vertical-align: top;
  text-align: left;
  white-space: nowrap;
}
th {
  padding: 3px 1px 0;
  border-color: #9aa3ad;
  background: linear-gradient(#eaf4ff, #d8e9fc);
  font-weight: normal;
  text-align: center;
}
.section td {
  padding: 3px 2px 0;
  border-right: none;
  font-weight: bold;
  font-style: italic;
  color: #000066;
}
.item td {
  height: 60px;
  padding-top: 3px;
}
.item td:nth-child(3) {
  white-space: normal;
}
td.mid {
  text-align: center;
}
td.num {
  text-align: right;
}
.cut {
  padding-right: 39px;
  text-align: right;
}
td.cut {
  padding-right: 39px;
}
.stack {
  height: 55px;
  display: flex;
  flex-direction: column;
  justify-content: space-between;
}
.stack span {
  display: flex;
  gap: 2px;
  padding-bottom: 3px;
}
.coef {
  color: #d01020;
}
.coef small {
  font-size: 10px;
  vertical-align: -1px;
}
.calc {
  padding-right: 2px;
  font-size: 9px;
  color: #008000;
}
.pair {
  display: flex;
  justify-content: space-between;
}
.res td {
  padding: 3px 1px 0;
  background: #ecf4f3;
  color: #d01020;
}
.sum td {
  background: #d8d8d8;
  font-weight: bold;
  padding: 3px 1px 0;
}
.sum .plus {
  margin-right: 8px;
}
.total td {
  height: 18px;
  padding-top: 3px;
  background: #fffff0;
  color: #000090;
}
.total.strong td {
  font-weight: bold;
  color: #000;
}
.total.current td {
  background: #ffffa8;
}
td.focus {
  outline: 1px dotted #000;
  outline-offset: -1px;
}
.plus {
  width: 9px;
  height: 9px;
  margin-left: 1px;
  border: 1px solid #7f8b96;
  border-radius: 1px;
  background:
    linear-gradient(#000, #000) center / 5px 1px no-repeat,
    linear-gradient(#000, #000) center / 1px 5px no-repeat,
    #eceeea;
}

/* Scroll bars */
.vscroll {
  width: 17px;
  display: flex;
  flex-direction: column;
  padding: 1px 1px 0 0;
  background: #f5f5f1;
}
.vscroll button,
.hscroll button {
  width: 16px;
  height: 16px;
  display: flex;
  align-items: center;
  justify-content: center;
  border: 1px solid #a9bdf0;
  border-radius: 2px;
  background: #c8d6fb;
}
.thumb {
  border: 1px solid #a5b8ee;
  border-radius: 2px;
}
.vscroll .thumb {
  height: 88px;
  margin-top: auto;
  background:
    repeating-linear-gradient(#8ea8e8 0 1px, transparent 1px 2px) center / 6px 7px no-repeat,
    linear-gradient(to right, #cad8fd, #bccbf8);
}
.hscroll {
  flex: none;
  display: flex;
  align-items: center;
  height: 18px;
  padding-right: 17px;
  background: linear-gradient(#efefeb, #fdfdfa);
}
.hscroll .thumb {
  width: 76px;
  height: 16px;
  margin-left: 2px;
  background:
    repeating-linear-gradient(to right, #8ea8e8 0 1px, transparent 1px 2px) center / 7px 6px no-repeat,
    linear-gradient(#cad8fd, #bccbf8);
}
.hscroll .end {
  margin-left: auto;
}

/* Status bar */
.status {
  flex: none;
  display: flex;
  align-items: stretch;
  height: 23px;
  border-top: 1px solid #567db0;
  background: linear-gradient(#dcebfd, #bcd6f8 45%, #d4e5fb);
  color: #15428b;
}
.status > div {
  display: flex;
  align-items: center;
}
.place {
  gap: 8px;
  padding: 0 6px 0 5px;
  border-right: 1px solid #6d93c8;
}
.calcmode {
  flex: none;
  gap: 2px;
  margin-left: auto;
  padding: 0 5px;
  border-left: 1px solid #6d93c8;
  background: linear-gradient(#a9c8f0, #86acdf 45%, #9dbdea);
}
.lamp {
  width: 14px;
  height: 14px;
  border: 1px solid #4fae3c;
  background: linear-gradient(#8fec78, #66d84e);
}
.mode {
  margin-right: 4px;
}
.modes {
  padding: 0 4px;
  border-left: 1px solid #e4effc;
  background: linear-gradient(#a9c8f0, #86acdf 45%, #9dbdea);
}
.modes button {
  width: 22px;
  height: 19px;
  display: flex;
  align-items: center;
  justify-content: center;
  background: #bcd3f2;
}
.modes .on {
  background: #fbd08c;
  border: 1px solid #d9a05a;
}
.modes svg {
  width: 16px;
  height: 16px;
}
.keys {
  width: 98px;
  justify-content: center;
  border-left: 1px solid #e4effc;
  background: linear-gradient(#a9c8f0, #86acdf 45%, #9dbdea);
}

/* Taskbar */
.taskbar {
  flex: none;
  display: flex;
  height: 30px;
  background: linear-gradient(#3c7ff0, #245edb 12%, #2560dc 85%, #1b45b4);
  color: #fff;
}
.start {
  width: 96px;
  display: flex;
  align-items: center;
  gap: 6px;
  padding-left: 11px;
  border-radius: 0 9px 9px 0;
  background: linear-gradient(#5fb35c, #3c933a 15%, #379237 75%, #2b6f2a);
  font: italic bold 17px "Liberation Sans", sans-serif;
}
.tasks {
  flex: 1;
  display: flex;
  gap: 2px;
  padding: 3px 10px 3px;
}
.tasks button {
  width: 158px;
  display: flex;
  align-items: center;
  gap: 4px;
  padding-left: 9px;
  border-radius: 3px;
  background: linear-gradient(#5a9bff, #3c7ff2 15%, #3a7cf0);
  white-space: nowrap;
}
.tasks .active {
  background: #1e50b8;
}
.tasks svg {
  width: 16px;
  height: 16px;
}
.tray {
  display: flex;
  align-items: center;
  gap: 2px;
  width: 129px;
  border-left: 1px solid #0c5fc4;
  background: linear-gradient(#2ab2f5, #1290e8 15%, #1290e8 85%, #0d70c8);
}
.expand {
  margin-left: -9px;
}
.tray time {
  margin-left: auto;
  padding-right: 16px;
}

/* Pen mark */
.mark {
  position: absolute;
  left: 276px;
  top: 135px;
  pointer-events: none;
}
```
